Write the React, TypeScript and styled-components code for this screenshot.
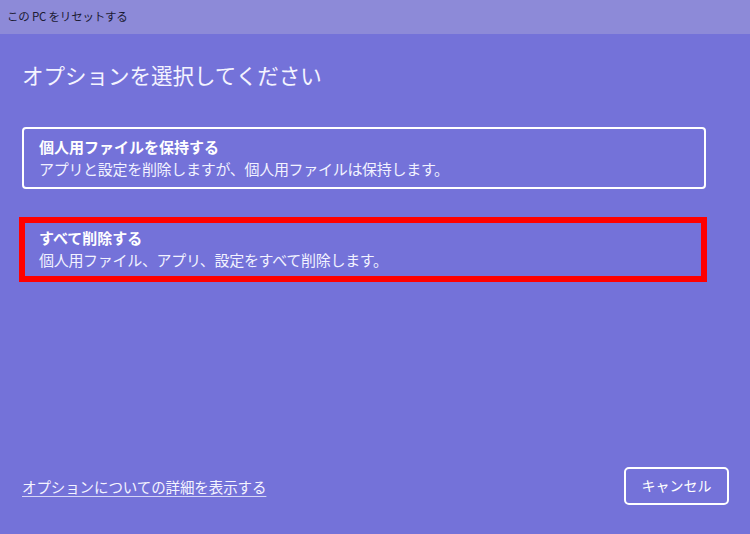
import styled, { createGlobalStyle } from "styled-components";

const GlobalStyle = createGlobalStyle`
  html, body {
    margin: 0;
    padding: 0;
    background: #7472d9;
  }
  body {
    font-family: "Noto Sans CJK JP", "Noto Sans", sans-serif;
  }
`;

const Window = styled.div`
  width: 750px;
  height: 534px;
  display: flex;
  flex-direction: column;
  background: #7472d9;
  color: #ffffff;
  overflow: hidden;
`;

const TitleBar = styled.div`
  height: 34px;
  flex-shrink: 0;
  display: flex;
  align-items: center;
  padding: 0 0 2px 7px;
  box-sizing: border-box;
  background: #8d8ad8;
  color: #1c1b33;
  font-size: 11.5px;
  letter-spacing: -0.2px;
`;

const Content = styled.div`
  flex: 1;
  display: flex;
  flex-direction: column;
  padding: 26px 22px 29px 22px;
`;

const Heading = styled.h1`
  margin: 0;
  font-size: 21.5px;
  font-weight: 400;
  line-height: 30px;
  color: #f4f4ff;
`;

const OptionList = styled.div`
  display: flex;
  flex-direction: column;
  gap: 28px;
  margin-top: 37px;
`;

const OptionCard = styled.div<{ $highlight?: boolean }>`
  box-sizing: border-box;
  display: flex;
  flex-direction: column;
  width: ${(p) => (p.$highlight ? "688px" : "684px")};
  margin-left: ${(p) => (p.$highlight ? "-3px" : "0")};
  border: ${(p) => (p.$highlight ? "6px solid #ff0000" : "2px solid #ffffff")};
  border-radius: ${(p) => (p.$highlight ? "0" : "4px")};
  padding: ${(p) => (p.$highlight ? "4px 14px 5px" : "7px 15px 7px")};
`;

const OptionTitle = styled.div`
  font-size: 15px;
  font-weight: 700;
  line-height: 22px;
  color: #ffffff;
`;

const OptionDesc = styled.div`
  font-size: 15px;
  line-height: 22px;
  color: #f2f2ff;
  letter-spacing: -0.3px;
`;

const Footer = styled.div`
  margin-top: auto;
  display: flex;
  align-items: center;
  justify-content: space-between;
`;

const DetailLink = styled.a`
  font-size: 14.5px;
  color: #f4f4ff;
  text-decoration: underline;
  text-decoration-color: #d6d5f5;
  text-underline-offset: 3px;
  letter-spacing: -0.1px;
  cursor: pointer;
`;

const CancelButton = styled.button`
  width: 105px;
  height: 38px;
  box-sizing: border-box;
  margin-right: -1px;
  border: 2px solid #ffffff;
  border-radius: 5px;
  background: transparent;
  color: #ffffff;
  font-family: inherit;
  font-size: 14px;
  padding: 0 0 2px;
  cursor: pointer;
`;

const App = () => {
  return (
    <>
      <GlobalStyle />
      <Window>
        <TitleBar>この PC をリセットする</TitleBar>
        <Content>
          <Heading>オプションを選択してください</Heading>
          <OptionList>
            <OptionCard>
              <OptionTitle>個人用ファイルを保持する</OptionTitle>
              <OptionDesc>
                アプリと設定を削除しますが、個人用ファイルは保持します。
              </OptionDesc>
            </OptionCard>
            <OptionCard $highlight>
              <OptionTitle>すべて削除する</OptionTitle>
              <OptionDesc>
                個人用ファイル、アプリ、設定をすべて削除します。
              </OptionDesc>
            </OptionCard>
          </OptionList>
          <Footer>
            <DetailLink>オプションについての詳細を表示する</DetailLink>
            <CancelButton>キャンセル</CancelButton>
          </Footer>
        </Content>
      </Window>
    </>
  );
};

export default App;
